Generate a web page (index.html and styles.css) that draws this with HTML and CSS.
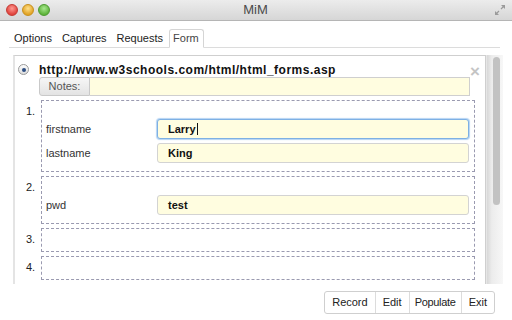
FILE: index.html
```html
<!DOCTYPE html>
<html lang="en">
<head>
    <meta charset="UTF-8">
    <title>MiM</title>
    <link rel="stylesheet" href="styles.css">
</head>
<body>
    <div class="titlebar">
        <div class="lights">
            <span class="light light-red"></span>
            <span class="light light-yellow"></span>
            <span class="light light-green"></span>
        </div>
        <div class="title">MiM</div>
        <div class="resize">
            <svg width="10" height="10" viewBox="0 0 10 10">
                <path d="M6 0 H10 V4 Z M4 10 H0 V6 Z" fill="#9a9a9a"/>
                <path d="M8.5 1.5 L6 4 M1.5 8.5 L4 6" stroke="#9a9a9a" stroke-width="1.2"/>
            </svg>
        </div>
    </div>

    <div class="tabs">
        <span class="tab">Options</span>
        <span class="tab">Captures</span>
        <span class="tab">Requests</span>
        <span class="tab tab-active">Form</span>
    </div>

    <div class="main">
        <div class="panel">
            <div class="page-row">
                <span class="radio"><span class="radio-dot"></span></span>
                <span class="page-url">http://www.w3schools.com/html/html_forms.asp</span>
                <span class="close">&times;</span>
            </div>
            <div class="notes-row">
                <span class="notes-label">Notes:</span>
                <input class="notes-input" type="text">
            </div>

            <div class="form-list">
                <div class="form-item">
                    <span class="form-num">1.</span>
                    <div class="form-box">
                        <div class="field">
                            <span class="field-name">firstname</span>
                            <div class="field-value field-focus">Larry<span class="caret"></span></div>
                        </div>
                        <div class="field">
                            <span class="field-name">lastname</span>
                            <div class="field-value">King</div>
                        </div>
                    </div>
                </div>
                <div class="form-item">
                    <span class="form-num">2.</span>
                    <div class="form-box">
                        <div class="field">
                            <span class="field-name">pwd</span>
                            <div class="field-value">test</div>
                        </div>
                    </div>
                </div>
                <div class="form-item">
                    <span class="form-num">3.</span>
                    <div class="form-box form-box-empty"></div>
                </div>
                <div class="form-item">
                    <span class="form-num">4.</span>
                    <div class="form-box form-box-empty"></div>
                </div>
            </div>
        </div>
        <div class="scrollbar">
            <div class="scroll-thumb"></div>
        </div>
    </div>

    <div class="actions">
        <div class="btn-group">
            <span class="btn">Record</span>
            <span class="btn">Edit</span>
            <span class="btn btn-tight">Populate</span>
            <span class="btn">Exit</span>
        </div>
    </div>
</body>
</html>
```

FILE: styles.css
```css
* {
    margin: 0;
    padding: 0;
    box-sizing: border-box;
}

body {
    width: 512px;
    height: 320px;
    overflow: hidden;
    background: #ffffff;
    font-family: "Liberation Sans", Arial, sans-serif;
    font-size: 11px;
    color: #222;
}

/* title bar */
.titlebar {
    height: 21px;
    display: grid;
    grid-template-columns: 1fr auto 1fr;
    align-items: center;
    background: linear-gradient(#ececec, #d6d6d6);
    border-bottom: 1px solid #b5b5b5;
    padding: 0 7px 1px 6px;
}

.lights {
    display: flex;
    gap: 4px;
}

.light {
    width: 12px;
    height: 12px;
    border-radius: 50%;
}

.light-red {
    background: radial-gradient(circle at 50% 35%, #ff9a92, #e0443e 70%);
    border: 1px solid #c43a33;
}

.light-yellow {
    background: radial-gradient(circle at 50% 35%, #ffe08a, #e1a325 70%);
    border: 1px solid #c8901d;
}

.light-green {
    background: radial-gradient(circle at 50% 35%, #a8e88f, #5fb43c 70%);
    border: 1px solid #4b9a2f;
}

.title {
    font-size: 13px;
    color: #4a4a4a;
}

.resize {
    display: flex;
    justify-content: flex-end;
}

/* tabs */
.tabs {
    display: flex;
    margin: 8px 12px 0 9px;
    height: 19px;
    border-bottom: 1px solid #dcdcdc;
}

.tab {
    padding: 2px 5px 0 5px;
    line-height: 14px;
    color: #222;
}

.tab-active {
    border: 1px solid #d5d5d5;
    border-bottom: 1px solid #ffffff;
    border-radius: 3px 3px 0 0;
    padding: 1px 4px 0 3px;
    margin-left: 1px;
    height: 19px;
    background: #fff;
    color: #444;
}

/* main area */
.main {
    display: flex;
    margin: 7px 9px 0 13px;
    height: 229px;
}

.panel {
    flex: 1;
    min-width: 0;
    border-left: 2px solid #e4e4e4;
    border-top: 1px solid #cfcfcf;
    border-right: 1px solid #cfcfcf;
    padding: 6px 10px 0 3px;
}

.page-row {
    display: flex;
    align-items: center;
    height: 15px;
}

.radio {
    width: 11px;
    height: 11px;
    border-radius: 50%;
    border: 1px solid #9a9a9a;
    background: linear-gradient(#fdfdfd, #dcdcdc);
    display: flex;
    align-items: center;
    justify-content: center;
    margin-right: 10px;
}

.radio-dot {
    width: 4px;
    height: 4px;
    border-radius: 50%;
    background: #2e4e82;
}

.page-url {
    flex: 1;
    min-width: 0;
    white-space: nowrap;
    font-weight: bold;
    font-size: 12px;
    letter-spacing: 0.5px;
    color: #111;
}

.close {
    margin: 3px -5px 0 0;
    color: #c4c4c4;
    font-size: 17px;
    font-weight: bold;
    line-height: 15px;
}

.notes-row {
    display: flex;
    margin: 0 5px 0 21px;
    height: 19px;
}

.notes-label {
    width: 51px;
    background: linear-gradient(#f6f6f6, #e3e3e3);
    border: 1px solid #c9c9c9;
    border-radius: 3px 0 0 3px;
    color: #555;
    text-align: center;
    line-height: 17px;
}

.notes-input {
    flex: 1;
    min-width: 0;
    background: #fffde0;
    border: 1px solid #cfcfcf;
    border-left: none;
    outline: none;
}

/* form items */
.form-list {
    display: flex;
    flex-direction: column;
    gap: 4px;
    margin-top: 4px;
}

.form-item {
    display: flex;
}

.form-num {
    width: 23px;
    padding: 5px 0 0 8px;
    color: #222;
}

.form-box {
    flex: 1;
    border: 1px dashed #9a9ab0;
    padding: 18px 5px 8px 4px;
    display: flex;
    flex-direction: column;
    gap: 4px;
}

.form-box-empty {
    height: 24px;
    padding: 0;
}

.field {
    display: flex;
    align-items: center;
}

.field-name {
    width: 111px;
    color: #333;
}

.field-value {
    flex: 1;
    height: 20px;
    background: #fffde0;
    border: 1px solid #d3d3d3;
    border-radius: 3px;
    padding-left: 10px;
    font-weight: bold;
    line-height: 18px;
    color: #111;
}

.field-focus {
    border: 1px solid #7eb0e4;
    box-shadow: 0 0 1px 1px #b4d3f3;
}

.caret {
    display: inline-block;
    width: 1px;
    height: 12px;
    background: #111;
    vertical-align: -2px;
    margin-left: 1px;
}

/* scrollbar */
.scrollbar {
    width: 17px;
    flex-shrink: 0;
    background: linear-gradient(to right, #d8d8d8, #ececec 30%, #f7f7f7);
    border-left: 1px solid #e6e6e6;
    padding: 2px 0 0 6px;
}

.scroll-thumb {
    width: 7px;
    height: 148px;
    border-radius: 4px;
    background: #c2c2c2;
}

/* bottom buttons */
.actions {
    display: flex;
    justify-content: flex-end;
    padding: 7px 17px 0 0;
}

.btn-group {
    display: flex;
    border: 1px solid #cfcfcf;
    border-radius: 3px;
    height: 23px;
}

.btn {
    line-height: 21px;
    padding: 0 7px;
    color: #222;
    border-left: 1px solid #dcdcdc;
}

.btn:first-child {
    border-left: none;
}

.btn-tight {
    padding: 0 5px;
    letter-spacing: -0.3px;
}
```
